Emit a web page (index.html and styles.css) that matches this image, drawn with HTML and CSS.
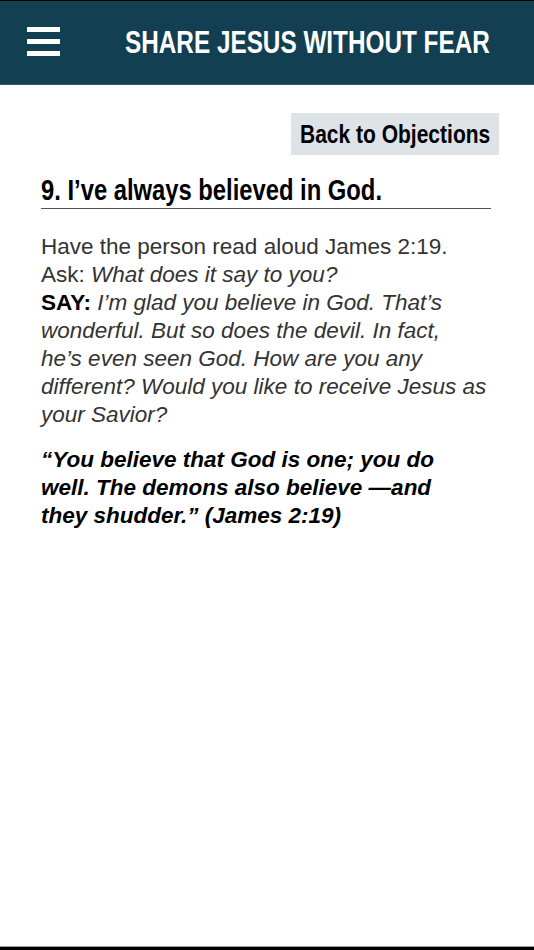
FILE: index.html
```html
<!DOCTYPE html>
<html lang="en">

<head>
    <meta charset="UTF-8">
    <meta name="viewport" content="width=device-width, initial-scale=1.0">
    <title>Share Jesus Without Fear</title>
    <link rel="stylesheet" href="styles.css">
</head>

<body>
    <div class="screen">
        <header class="topbar">
            <button type="button" class="menu-btn" aria-label="Menu">
                <span></span>
                <span></span>
                <span></span>
            </button>
            <h1 class="title"><span>SHARE JESUS WITHOUT FEAR</span></h1>
        </header>

        <main class="content">
            <div class="back-row">
                <a href="#" class="back-btn"><span>Back to Objections</span></a>
            </div>

            <h2 class="objection"><span>9. I’ve always believed in God.</span></h2>

            <p class="answer">
                Have the person read aloud James 2:19.<br>
                Ask: <em>What does it say to you?</em><br>
                <strong>SAY:</strong> <em>I’m glad you believe in God. That’s wonderful. But so does the devil. In fact, he’s&nbsp;even seen God. How are you any different? Would you like to receive Jesus as your Savior?</em>
            </p>

            <p class="verse">“You believe that God is one; you do well. The demons also believe —and they shudder.” (James 2:19)</p>
        </main>

        <div class="bottom-edge"></div>
    </div>
</body>

</html>
```

FILE: styles.css
```css
body {
    margin: 0;
    background-color: #ffffff;
    font-family: "Liberation Sans", Arial, sans-serif;
}

.screen {
    height: 100vh;
    display: flex;
    flex-direction: column;
    overflow: hidden;
}

.topbar {
    height: 85px;
    box-sizing: border-box;
    background-color: #123f52;
    border-top: 1px solid #000000;
    border-bottom: 1px solid #2b5568;
    display: flex;
    align-items: center;
    padding-left: 27px;
    overflow: hidden;
    flex-shrink: 0;
}

.menu-btn {
    background: none;
    border: none;
    padding: 0;
    width: 33px;
    flex-shrink: 0;
    display: flex;
    flex-direction: column;
    gap: 7px;
    margin-top: -3px;
}

.menu-btn span {
    display: block;
    height: 5px;
    background: #ffffff;
}

.title {
    margin: 0 0 0 65px;
    width: 370px;
    flex-shrink: 0;
    color: #ffffff;
    font-size: 32px;
    font-weight: bold;
    white-space: nowrap;
}

.title span {
    display: inline-block;
    transform: scaleX(0.76);
    transform-origin: left center;
}

.content {
    flex: 1;
    padding: 28px 43px 0 41px;
}

.back-row {
    display: flex;
    justify-content: flex-end;
    margin-right: -8px;
}

.back-btn {
    display: block;
    width: 208px;
    height: 42px;
    line-height: 42px;
    background: #dde3e6;
    color: #000000;
    text-decoration: none;
    font-size: 25px;
    font-weight: bold;
    white-space: nowrap;
    overflow: hidden;
}

.back-btn span {
    display: inline-block;
    transform: scaleX(0.84);
    transform-origin: left center;
    margin-left: 9px;
}

.objection {
    margin: 18px 0 0;
    padding-bottom: 1px;
    border-bottom: 1px solid #555555;
    font-size: 29px;
    font-weight: bold;
    color: #000000;
    white-space: nowrap;
    line-height: 34px;
    overflow: hidden;
}

.objection span {
    display: inline-block;
    transform: scaleX(0.82);
    transform-origin: left center;
}

.answer {
    margin: 24px 0 0;
    padding-right: 2px;
    font-size: 22.5px;
    line-height: 28px;
    color: #333333;
}

.answer strong {
    color: #000000;
}

.verse {
    margin: 17px 0 0;
    padding-right: 10px;
    font-size: 22.5px;
    line-height: 28px;
    font-weight: bold;
    font-style: italic;
    color: #000000;
}

.bottom-edge {
    height: 3px;
    flex-shrink: 0;
    background: #000000;
    border-top: 1px solid #9a9a9a;
}
```
